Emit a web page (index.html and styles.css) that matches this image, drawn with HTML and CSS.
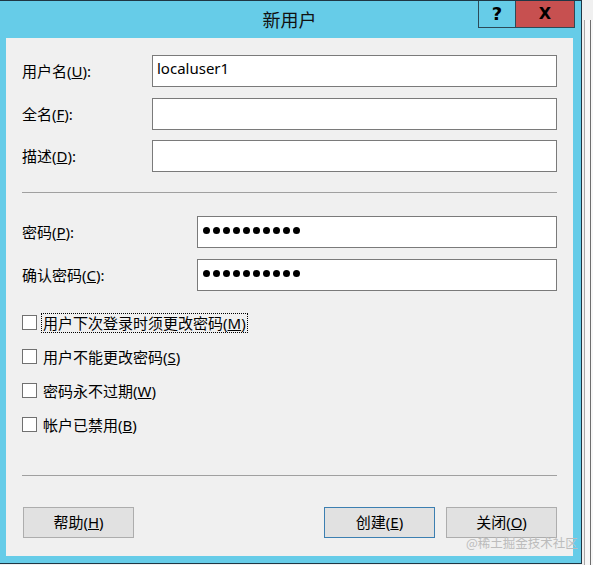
FILE: index.html
```html
<!DOCTYPE html>
<html lang="zh-CN">
<head>
<meta charset="utf-8">
<title>新用户</title>
<link rel="stylesheet" href="styles.css">
</head>
<body>
<div class="desktop">
  <div class="window">
    <div class="titlebar">
      <span class="title">新用户</span>
      <div class="caption">
        <span class="cap cap-help">?</span>
        <span class="cap cap-close">X</span>
      </div>
    </div>
    <div class="client">
      <div class="fields fields-user">
        <label class="lbl">用户名(<u>U</u>):</label>
        <div class="input">localuser1</div>
        <label class="lbl">全名(<u>F</u>):</label>
        <div class="input"></div>
        <label class="lbl">描述(<u>D</u>):</label>
        <div class="input"></div>
      </div>
      <div class="sep sep-1"></div>
      <div class="fields fields-pass">
        <label class="lbl">密码(<u>P</u>):</label>
        <div class="input input-pass"><span class="dots" aria-label="••••••••••"><i></i><i></i><i></i><i></i><i></i><i></i><i></i><i></i><i></i><i></i></span></div>
        <label class="lbl">确认密码(<u>C</u>):</label>
        <div class="input input-pass"><span class="dots" aria-label="••••••••••"><i></i><i></i><i></i><i></i><i></i><i></i><i></i><i></i><i></i><i></i></span></div>
      </div>
      <div class="checks">
        <div class="check"><span class="box"></span><span class="check-text focus">用户下次登录时须更改密码(<u>M</u>)</span></div>
        <div class="check"><span class="box"></span><span class="check-text">用户不能更改密码(<u>S</u>)</span></div>
        <div class="check"><span class="box"></span><span class="check-text">密码永不过期(<u>W</u>)</span></div>
        <div class="check"><span class="box"></span><span class="check-text">帐户已禁用(<u>B</u>)</span></div>
      </div>
      <div class="sep sep-2"></div>
      <div class="buttons">
        <span class="btn btn-help">帮助(<u>H</u>)</span>
        <span class="spacer"></span>
        <span class="btn btn-default">创建(<u>E</u>)</span>
        <span class="btn">关闭(<u>O</u>)</span>
      </div>
    </div>
  </div>
  <div class="behind"><div class="behind-frame"><div class="behind-inner"></div></div></div>
</div>
<div class="watermark">@稀土掘金技术社区</div>
</body>
</html>
```

FILE: styles.css
```css
* { box-sizing: border-box; }
html, body { margin: 0; padding: 0; }
body {
  width: 593px;
  height: 565px;
  overflow: hidden;
  background: #f0f0f0;
  font-family: "Noto Sans", "Noto Sans CJK SC", sans-serif;
  font-size: 15px;
  color: #000;
  position: relative;
}
.desktop { display: flex; height: 565px; }
.window {
  width: 582px;
  height: 564px;
  flex: none;
  background: #66cce8;
  border-top: 1px solid #1f3644;
  border-right: 1px solid #1f3644;
  border-bottom: 1px solid #1f3644;
  padding: 0 8px 7px 6px;
  display: flex;
  flex-direction: column;
}
.titlebar {
  height: 37px;
  flex: none;
  position: relative;
  display: flex;
  justify-content: center;
  align-items: center;
}
.title {
  font-size: 18px;
  line-height: 24px;
  margin-top: 1px;
  color: #111;
}
.caption {
  position: absolute;
  top: 0;
  right: -2px;
  display: flex;
}
.cap {
  height: 27px;
  display: flex;
  align-items: center;
  justify-content: center;
  border: 1px solid #2c4a58;
  border-top: none;
  font-family: "DejaVu Sans", sans-serif;
  font-weight: bold;
  color: #000;
  line-height: 1;
}
.cap-help { width: 37px; font-size: 18px; background: #66cce8; border-right: none; }
.cap-close { width: 60px; font-size: 16px; background: #c75050; }
.client {
  flex: 1;
  background: #f0f0f0;
  padding: 17px 16px 0 16px;
}
.fields {
  display: grid;
  row-gap: 10.5px;
  align-items: center;
}
.fields-user { grid-template-columns: 130px 1fr; }
.fields-pass { grid-template-columns: 175px 1fr; margin-top: 23px; }
.lbl { line-height: 20px; white-space: nowrap; }
.input {
  height: 32px;
  background: #fff;
  border: 1px solid #7a7a7a;
  padding: 2px 4px 0 4px;
  line-height: 20px;
}
.input-pass { padding: 10px 5px 0 5px; }
.dots { display: flex; gap: 3px; }
.dots i { width: 7px; height: 7px; border-radius: 50%; background: #000; display: block; }
.sep { height: 1px; background: #a0a0a0; }
.sep-1 { margin-top: 20px; }
.checks { margin-top: 22px; display: flex; flex-direction: column; gap: 14px; }
.check { display: flex; align-items: center; height: 20px; }
.box {
  width: 15px;
  height: 15px;
  background: #fff;
  border: 1px solid #707070;
  flex: none;
}
.check-text {
  margin-left: 4px;
  padding: 0 1px;
  line-height: 18px;
  border: 1px dotted transparent;
  white-space: nowrap;
}
.check-text.focus { border-color: #000; }
.sep-2 { margin-top: 40px; }
.buttons { display: flex; gap: 11px; margin-top: 31px; }
.spacer { flex: 1; }
.btn {
  width: 111px;
  height: 31px;
  display: flex;
  align-items: center;
  justify-content: center;
  background: #e1e1e1;
  border: 1px solid #adadad;
  line-height: 20px;
}
.btn-help { margin-left: 1px; }
.btn-default { border-color: #3c7fb1; }
.behind { flex: 1; padding: 20px 0 0 2px; background: #f0f0f0; }
.behind-frame { height: 100%; border-left: 1px solid #a8a8a8; padding-left: 5px; background: #f7f7f7; }
.behind-inner { height: 100%; border-left: 1px solid #6e6e6e; }
.watermark {
  position: absolute;
  left: 466px;
  top: 534px;
  font-size: 12.5px;
  line-height: 18px;
  color: #bcbcbc;
  font-family: "Noto Sans CJK SC", sans-serif;
  white-space: nowrap;
}
```
